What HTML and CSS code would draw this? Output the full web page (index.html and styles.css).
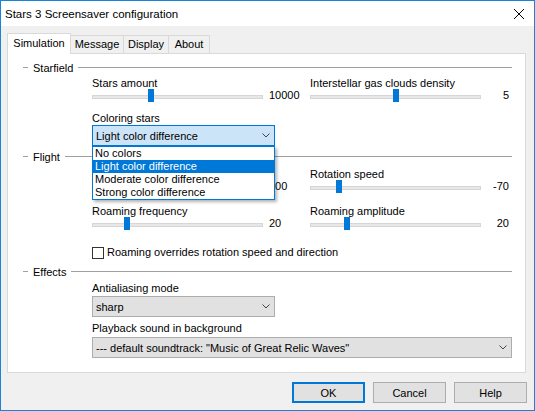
FILE: index.html
```html
<!DOCTYPE html>
<html>
<head>
<meta charset="utf-8">
<link rel="stylesheet" href="styles.css">
</head>
<body>
<div class="window">
  <div class="titlebar">
    <span class="title">Stars 3 Screensaver configuration</span>
    <svg class="close" viewBox="0 0 10 10"><path d="M0 0 L10 10 M10 0 L0 10" stroke="#000" stroke-width="1" fill="none"/></svg>
  </div>
  <div class="client">
    <div class="tabs">
      <div class="tab active tab-sim">Simulation</div>
      <div class="tab tab-msg">Message</div>
      <div class="tab tab-disp">Display</div>
      <div class="tab tab-about">About</div>
    </div>
    <div class="panel">
      <div class="group-head"><span class="dash"></span><span>Starfield</span><span class="rule"></span></div>
      <div class="group-body starfield">
        <div class="grid">
          <div class="slider">
            <div class="label">Stars amount</div>
            <div class="slider-row">
              <div class="track"><div class="thumb" style="left:32.5%"></div></div>
              <div class="value">10000</div>
            </div>
          </div>
          <div class="slider">
            <div class="label">Interstellar gas clouds density</div>
            <div class="slider-row">
              <div class="track"><div class="thumb" style="left:48.5%"></div></div>
              <div class="value right">5</div>
            </div>
          </div>
        </div>
        <div class="label coloring">Coloring stars</div>
        <div class="combo-wrap">
          <div class="combo focus">
            <span class="combo-text">Light color difference</span>
            <svg class="chev" viewBox="0 0 8 5"><path d="M0.5 0.5 L4 4 L7.5 0.5" stroke="#444" stroke-width="1" fill="none"/></svg>
          </div>
          <div class="dropdown">
            <div class="item">No colors</div>
            <div class="item sel">Light color difference</div>
            <div class="item">Moderate color difference</div>
            <div class="item">Strong color difference</div>
          </div>
        </div>
      </div>

      <div class="group-head flight-head"><span class="dash"></span><span>Flight</span><span class="rule"></span></div>
      <div class="group-body flight">
        <div class="grid">
          <div class="slider">
            <div class="label"></div>
            <div class="slider-row">
              <div class="track"><div class="thumb" style="left:30%"></div></div>
              <div class="value">100</div>
            </div>
          </div>
          <div class="slider">
            <div class="label">Rotation speed</div>
            <div class="slider-row">
              <div class="track"><div class="thumb" style="left:14.8%"></div></div>
              <div class="value right">-70</div>
            </div>
          </div>
          <div class="slider">
            <div class="label">Roaming frequency</div>
            <div class="slider-row">
              <div class="track"><div class="thumb" style="left:18.3%"></div></div>
              <div class="value">20</div>
            </div>
          </div>
          <div class="slider">
            <div class="label">Roaming amplitude</div>
            <div class="slider-row">
              <div class="track"><div class="thumb" style="left:19.5%"></div></div>
              <div class="value right">20</div>
            </div>
          </div>
        </div>
        <div class="check-row"><span class="checkbox"></span><span>Roaming overrides rotation speed and direction</span></div>
      </div>

      <div class="group-head effects-head"><span class="dash"></span><span>Effects</span><span class="rule"></span></div>
      <div class="group-body effects">
        <div class="label">Antialiasing mode</div>
        <div class="combo aa">
          <span class="combo-text">sharp</span>
          <svg class="chev" viewBox="0 0 8 5"><path d="M0.5 0.5 L4 4 L7.5 0.5" stroke="#444" stroke-width="1" fill="none"/></svg>
        </div>
        <div class="label playback">Playback sound in background</div>
        <div class="combo wide">
          <span class="combo-text">--- default soundtrack: "Music of Great Relic Waves"</span>
          <svg class="chev" viewBox="0 0 8 5"><path d="M0.5 0.5 L4 4 L7.5 0.5" stroke="#444" stroke-width="1" fill="none"/></svg>
        </div>
      </div>
    </div>
    <div class="buttons">
      <div class="btn default">OK</div>
      <div class="btn">Cancel</div>
      <div class="btn">Help</div>
    </div>
  </div>
</div>
</body>
</html>
```
FILE: styles.css
```css
* { box-sizing: border-box; }
body {
  margin: 0;
  font-family: "Liberation Sans", Arial, sans-serif;
  font-size: 11px;
  color: #000;
}
.window {
  width: 535px;
  height: 411px;
  border: 1px solid #1883d7;
  background: #f0f0f0;
  display: flex;
  flex-direction: column;
}
.titlebar {
  flex: none;
  height: 25px;
  background: #fff;
  display: flex;
  align-items: center;
  padding: 0 10px 0 4px;
}
.title { font-size: 11.5px; white-space: nowrap; }
.close { margin-left: auto; width: 10px; height: 10px; }
.client {
  flex: 1;
  padding-top: 7px;
  display: flex;
  flex-direction: column;
}
.tabs {
  display: flex;
  align-items: flex-end;
  height: 21px;
  margin: 0 0 -1px 6px;
  position: relative;
  z-index: 1;
}
.tab {
  height: 19px;
  border: 1px solid #d9d9d9;
  border-left: none;
  background: #f0f0f0;
  display: flex;
  align-items: center;
  justify-content: center;
  line-height: 13px;
  white-space: nowrap;
}
.tab:first-child { border-left: 1px solid #d9d9d9; }
.tab.active {
  height: 21px;
  background: #fff;
  border-bottom: none;
  padding-bottom: 2px;
}
.tab-sim { width: 64px; }
.tab-msg { width: 53px; }
.tab-disp { width: 45px; }
.tab-about { width: 41px; }
.panel {
  margin-left: 6px;
  width: 519px;
  height: 320px;
  background: #fff;
  border: 1px solid #d9d9d9;
  padding: 8px 13px 0 0;
}
.group-head {
  display: flex;
  align-items: center;
  height: 13px;
  line-height: 13px;
  padding-left: 15px;
  white-space: nowrap;
}
.dash {
  width: 5px;
  height: 1px;
  background: #a0a0a0;
  margin-right: 5px;
  margin-bottom: 2px;
}
.rule {
  flex: 1;
  height: 1px;
  background: #a0a0a0;
  margin-left: 5px;
  margin-bottom: 2px;
}
.group-body { margin-left: 84px; }
.starfield { margin-top: 2px; }
.flight-head { margin-top: 5px; }
.flight { margin-top: 4px; }
.effects-head { margin-top: 7px; }
.effects { margin-top: 3px; }
.grid {
  display: grid;
  grid-template-columns: 218px 199px;
  row-gap: 12px;
}
.label {
  height: 12px;
  line-height: 12px;
  white-space: nowrap;
}
.slider-row { display: flex; height: 13px; }
.track {
  flex: none;
  width: 171px;
  height: 4px;
  margin-top: 6px;
  background: #e7e7e7;
  border: 1px solid #d6d6d6;
  position: relative;
}
.thumb {
  position: absolute;
  top: -7px;
  width: 6px;
  height: 13px;
  background: #0078d7;
}
.value {
  flex: 1;
  line-height: 13px;
  padding-left: 6px;
  white-space: nowrap;
}
.value.right { text-align: right; padding-left: 0; }
.coloring { margin-top: 10px; }
.combo-wrap {
  position: relative;
  width: 183px;
  margin-top: 1px;
}
.combo {
  width: 183px;
  height: 21px;
  border: 1px solid #adadad;
  background: #e1e1e1;
  display: flex;
  align-items: center;
  padding: 0 4px 0 3px;
  white-space: nowrap;
}
.combo.focus { border-color: #0078d7; background: #cce4f7; }
.combo.aa { margin-top: 2px; }
.combo.wide { width: 420px; margin-top: 3px; }
.playback { margin-top: 5px; }
.combo-text { flex: 1; }
.chev { width: 8px; height: 5px; flex: none; }
.dropdown {
  position: absolute;
  top: 21px;
  left: 0;
  width: 183px;
  border: 1px solid #0078d7;
  background: #fff;
  box-shadow: 2px 2px 3px rgba(0, 0, 0, 0.3);
  z-index: 5;
}
.item {
  height: 13px;
  line-height: 13px;
  padding-left: 2px;
  white-space: nowrap;
}
.item.sel { background: #0078d7; color: #fff; }
.check-row {
  display: flex;
  align-items: center;
  height: 13px;
  line-height: 13px;
  margin-top: 16px;
  white-space: nowrap;
}
.checkbox {
  width: 12px;
  height: 12px;
  border: 1px solid #333;
  background: #fff;
  margin-right: 3px;
}
.buttons {
  display: flex;
  justify-content: flex-end;
  gap: 8px;
  padding-right: 7px;
  margin-top: 9px;
}
.btn {
  width: 73px;
  height: 21px;
  border: 1px solid #adadad;
  background: #e1e1e1;
  display: flex;
  align-items: center;
  justify-content: center;
}
.btn.default { border: 2px solid #0078d7; }
```
